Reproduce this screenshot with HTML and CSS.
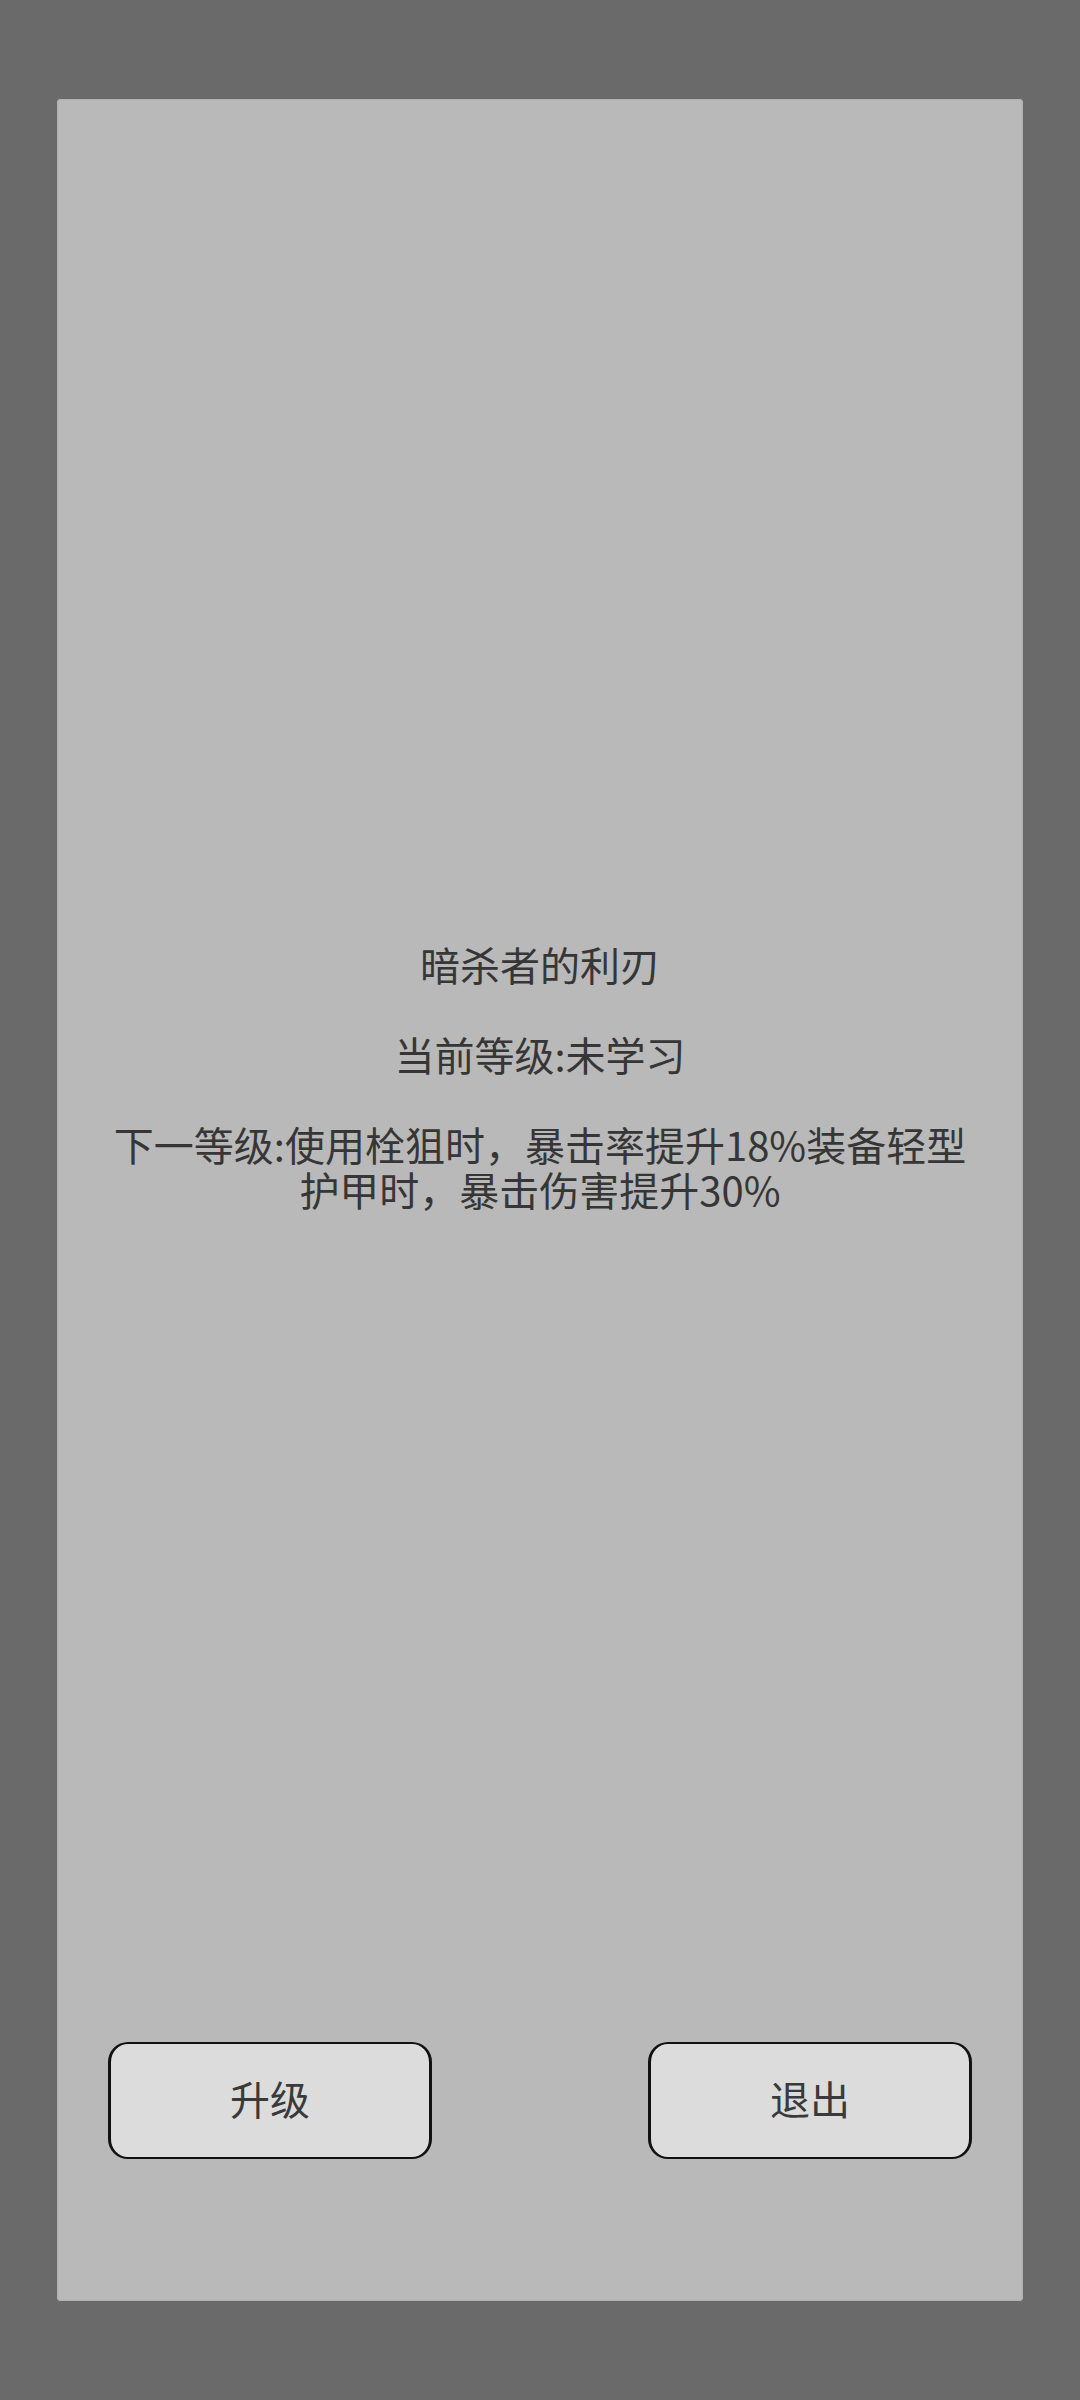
FILE: index.html
```html
<!DOCTYPE html>
<html lang="zh-CN">
<head>
<meta charset="utf-8">
<title>暗杀者的利刃</title>
<link rel="stylesheet" href="styles.css">
</head>
<body>
<div class="screen">
  <div class="panel">
    <div class="info">
      <p class="line">暗杀者的利刃</p>
      <p class="line">当前等级:未学习</p>
      <p class="line">下一等级:使用栓狙时，暴击率提升18%装备轻型<br>护甲时，暴击伤害提升30%</p>
    </div>
    <div class="actions">
      <button class="btn">升级</button>
      <button class="btn">退出</button>
    </div>
  </div>
</div>
</body>
</html>
```

FILE: styles.css
```css
html, body {
  margin: 0;
  padding: 0;
  background: #6a6a6a;
}

.screen {
  width: 1080px;
  height: 2400px;
  box-sizing: border-box;
  padding: 99px 57px;
  font-family: "Noto Sans CJK SC", "Noto Sans", sans-serif;
}

.panel {
  height: 2202px;
  box-sizing: border-box;
  background: #b9b9b9;
  border-radius: 4px;
  box-shadow: inset 0 0 0 1px #b0b0b0;
  display: flex;
  flex-direction: column;
  padding-bottom: 142px;
}

.info {
  margin-top: 843px;
  padding: 0 40px;
  text-align: center;
  color: #363636;
  font-size: 40px;
  line-height: 45px;
}

.line {
  margin: 0 0 45px 0;
}

.line:last-child {
  margin-bottom: 0;
}

.actions {
  margin-top: auto;
  display: flex;
  justify-content: space-between;
  padding: 0 51px;
}

.btn {
  width: 324px;
  height: 117px;
  box-sizing: border-box;
  background: #dcdcdc;
  border: 2px solid #111111;
  border-left-width: 3px;
  border-right-width: 3px;
  border-radius: 20px;
  font-family: "Noto Sans CJK SC", "Noto Sans", sans-serif;
  font-size: 40px;
  color: #3a3a3a;
  padding: 0 0 5px 0;
  display: flex;
  align-items: center;
  justify-content: center;
}
```
